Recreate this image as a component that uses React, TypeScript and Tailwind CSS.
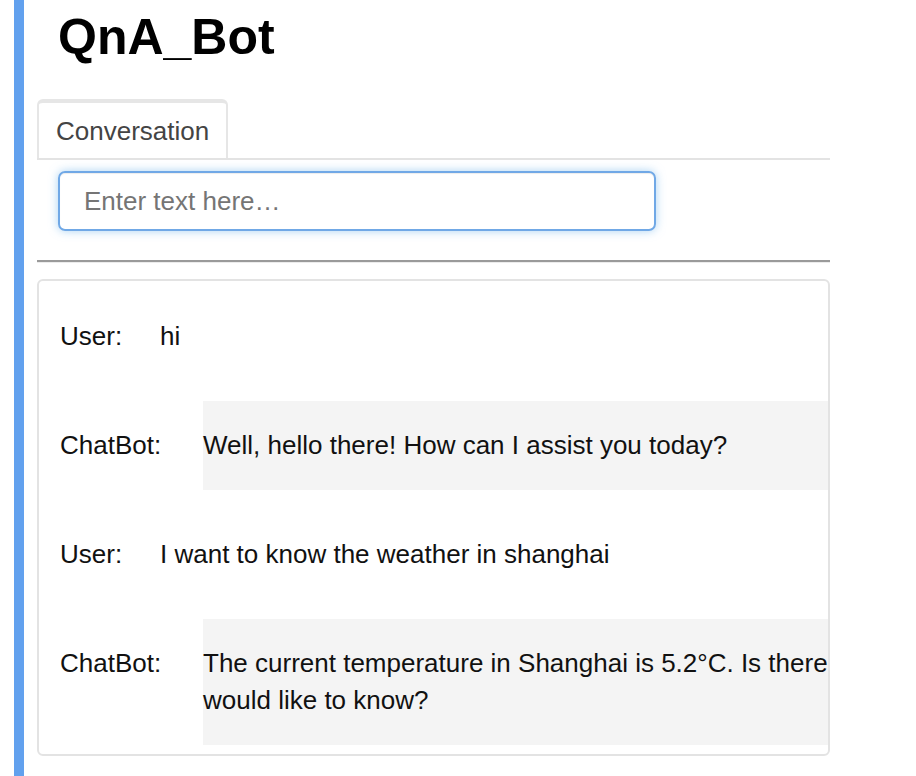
import React from "react";

function UserRow({ text }: { text: string }) {
  return (
    <div className="flex py-[26px] text-[26px] leading-[37px] text-[#111]">
      <div className="pl-[21px] w-[121px] shrink-0">User:</div>
      <div className="shrink-0 whitespace-nowrap">{text}</div>
    </div>
  );
}

function BotRow({ text }: { text: string }) {
  return (
    <div className="flex text-[26px] leading-[37px] text-[#111]">
      <div className="pl-[21px] w-[164px] shrink-0 py-[26px]">ChatBot:</div>
      <div className="w-[860px] shrink-0 bg-[#f4f4f4] py-[26px]">{text}</div>
    </div>
  );
}

export default function App() {
  return (
    <div className="min-h-[776px] bg-white font-['Liberation_Sans',Arial,sans-serif] flex">
      <div className="ml-[14px] w-[10px] bg-[#62a1ee] shrink-0" />
      <div className="pl-[13px] w-[806px] flex flex-col">
        <h1 className="mt-[8px] pl-[21px] text-[50px] leading-[58px] font-bold text-black">
          QnA_Bot
        </h1>
        <div className="mt-[33px] flex border-b-2 border-[#e3e3e3]">
          <div className="border-t-4 border-x-2 border-[#e6e6e6] rounded-t-[6px] px-[17px] pt-[10px] pb-[8px] text-[26px] leading-[37px] text-[#444]">
            Conversation
          </div>
        </div>
        <div className="pl-[21px] pt-[11px]">
          <input
            type="text"
            placeholder="Enter text here…"
            className="w-[598px] h-[60px] border-2 border-[#70a8e6] rounded-[7px] pl-[24px] text-[26px] text-[#333] placeholder:text-[#757575] outline-none shadow-[inset_0_1px_1px_rgba(0,0,0,0.075),0_0_10px_rgba(102,175,233,0.55)]"
          />
        </div>
        <div className="mt-[29px] border-t-2 border-[#9a9a9a] border-b border-b-[#ececec]" />
        <div className="mt-[16px] border-2 border-[#e3e3e3] rounded-[6px] overflow-hidden pt-[11px] pb-[9px] flex flex-col gap-[20px]">
          <UserRow text="hi" />
          <BotRow text="Well, hello there! How can I assist you today?" />
          <UserRow text="I want to know the weather in shanghai" />
          <BotRow text="The current temperature in Shanghai is 5.2°C. Is there anything else you would like to know?" />
        </div>
      </div>
    </div>
  );
}
